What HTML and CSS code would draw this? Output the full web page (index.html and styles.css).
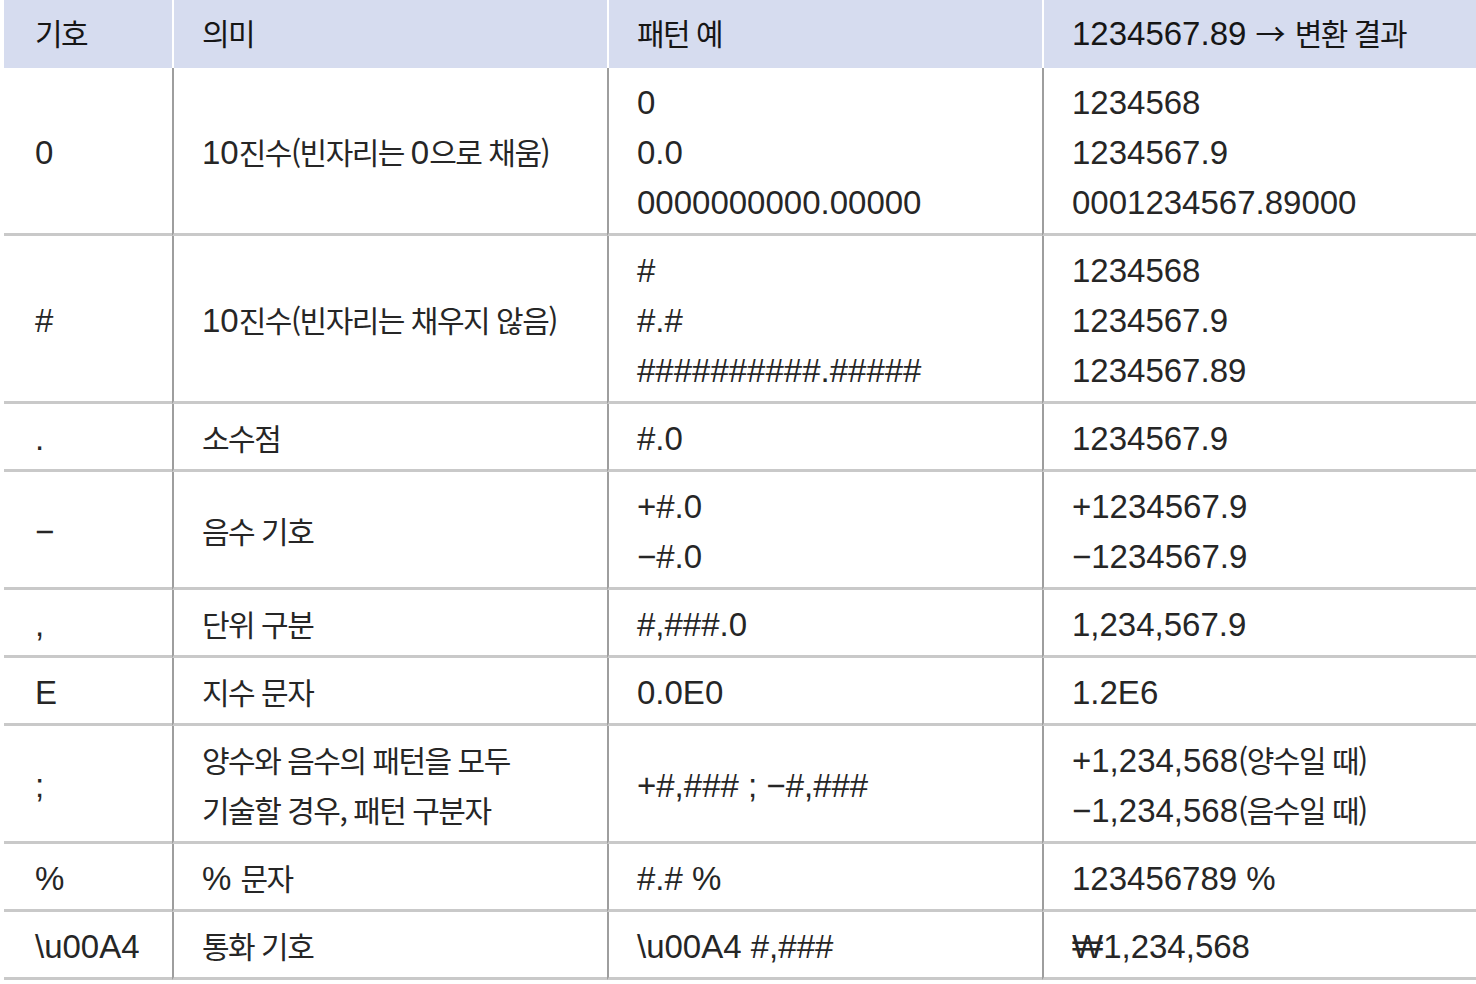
FILE: index.html
```html
<!DOCTYPE html>
<html lang="ko">
<head>
<meta charset="utf-8">
<link rel="stylesheet" href="styles.css">
</head>
<body>
<div class="tbl">
  <div class="th c1"><span class="v"><span class="k">기호</span></span></div>
  <div class="th"><span class="v"><span class="k">의미</span></span></div>
  <div class="th"><span class="v"><span class="k">패턴 예</span></span></div>
  <div class="th"><span class="v">1234567.89 <span class="arr">→</span> <span class="k">변환 결과</span></span></div>

  <div class="td c1"><span class="v">0</span></div>
  <div class="td"><span class="v">10<span class="k">진수(빈자리는 </span>0<span class="k">으로 채움)</span></span></div>
  <div class="td"><span class="v">0<br>0.0<br>0000000000.00000</span></div>
  <div class="td"><span class="v">1234568<br>1234567.9<br>0001234567.89000</span></div>

  <div class="td c1"><span class="v">#</span></div>
  <div class="td"><span class="v">10<span class="k">진수(빈자리는 채우지 않음)</span></span></div>
  <div class="td"><span class="v">#<br>#.#<br>##########.#####</span></div>
  <div class="td"><span class="v">1234568<br>1234567.9<br>1234567.89</span></div>

  <div class="td c1"><span class="v">.</span></div>
  <div class="td"><span class="v"><span class="k">소수점</span></span></div>
  <div class="td"><span class="v">#.0</span></div>
  <div class="td"><span class="v">1234567.9</span></div>

  <div class="td c1"><span class="v">−</span></div>
  <div class="td"><span class="v"><span class="k">음수 기호</span></span></div>
  <div class="td"><span class="v">+#.0<br>−#.0</span></div>
  <div class="td"><span class="v">+1234567.9<br>−1234567.9</span></div>

  <div class="td c1"><span class="v">,</span></div>
  <div class="td"><span class="v"><span class="k">단위 구분</span></span></div>
  <div class="td"><span class="v">#,###.0</span></div>
  <div class="td"><span class="v">1,234,567.9</span></div>

  <div class="td c1"><span class="v">E</span></div>
  <div class="td"><span class="v"><span class="k">지수 문자</span></span></div>
  <div class="td"><span class="v">0.0E0</span></div>
  <div class="td"><span class="v">1.2E6</span></div>

  <div class="td c1"><span class="v">;</span></div>
  <div class="td"><span class="v"><span class="k">양수와 음수의 패턴을 모두</span><br><span class="k">기술할 경우, 패턴 구분자</span></span></div>
  <div class="td"><span class="v">+#,### ; −#,###</span></div>
  <div class="td"><span class="v">+1,234,568<span class="k">(양수일 때)</span><br>−1,234,568<span class="k">(음수일 때)</span></span></div>

  <div class="td c1"><span class="v">%</span></div>
  <div class="td"><span class="v">% <span class="k">문자</span></span></div>
  <div class="td"><span class="v">#.# %</span></div>
  <div class="td"><span class="v">123456789 %</span></div>

  <div class="td c1"><span class="v">\u00A4</span></div>
  <div class="td"><span class="v"><span class="k">통화 기호</span></span></div>
  <div class="td"><span class="v">\u00A4 #,###</span></div>
  <div class="td"><span class="v">₩1,234,568</span></div>
</div>
</body>
</html>
```

FILE: styles.css
```css
html, body {
  margin: 0;
  padding: 0;
  background: #ffffff;
}
body {
  padding-left: 4px;
  font-family: "Liberation Sans", "Noto Sans CJK KR", sans-serif;
  font-size: 33px;
  color: #262626;
}
.tbl {
  display: grid;
  grid-template-columns: 168px 435px 435px 1fr;
  width: 1472px;
}
.th {
  background: #d6dcef;
  padding: 9px 0 9px 28px;
  border-left: 2px solid #ffffff;
  color: #161616;
}
.td {
  padding: 10px 0 5px 28px;
  border-bottom: 3px solid #c9c9c9;
  border-left: 2px solid #9e9e9e;
  display: flex;
  flex-direction: column;
  justify-content: center;
}
.v {
  display: block;
  height: auto;
  line-height: 50px;
}
.th.c1, .td.c1 {
  border-left: none;
  padding-left: 31px;
}
.k {
  font-family: "Noto Sans CJK KR", sans-serif;
  font-size: 30px;
  letter-spacing: -1.5px;
  line-height: 20px;
  vertical-align: baseline;
}
.arr {
  font-family: "Noto Sans CJK KR", sans-serif;
  font-size: 30px;
  line-height: 20px;
}
```
